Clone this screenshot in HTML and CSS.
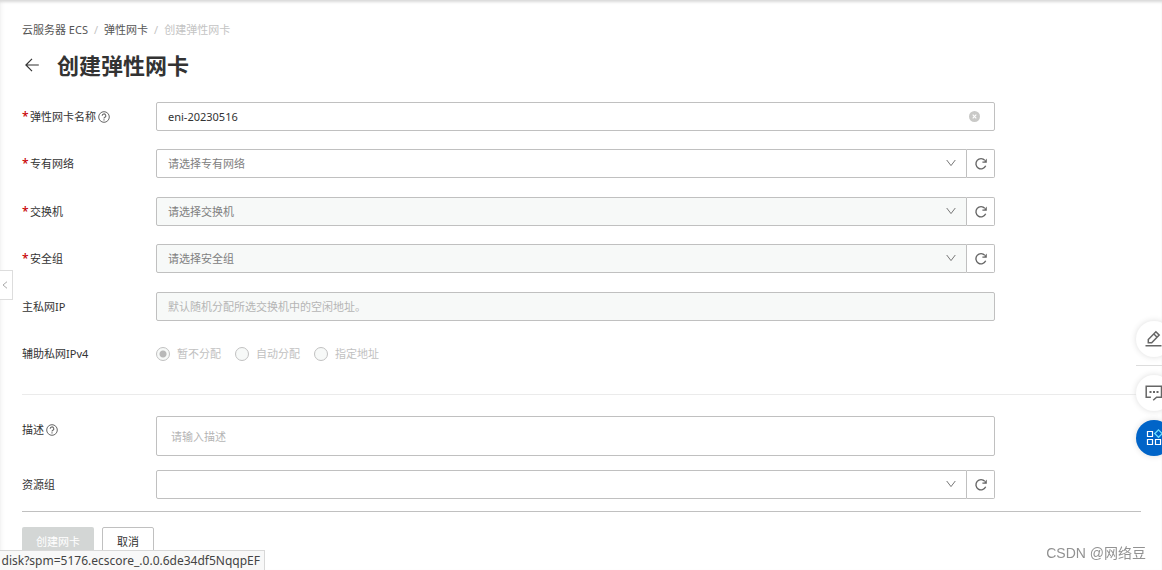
FILE: index.html
```html
<!DOCTYPE html>
<html lang="zh-CN">
<head>
<meta charset="utf-8">
<title>创建弹性网卡</title>
<link rel="stylesheet" href="styles.css">
</head>
<body>
<svg class="sprite" aria-hidden="true">
  <symbol id="refresh" viewBox="0 0 14 14"><path d="M11.7 8.8A5.1 5.1 0 1 1 10.9 3.4" fill="none" stroke="currentColor" stroke-width="1.4"/><path d="M12.8 1.4v4.4H8.4V4.6l2-.2z" fill="currentColor"/></symbol>
  <symbol id="chevron" viewBox="0 0 10 8"><path d="M.7 1 5 6.6 9.3 1" fill="none" stroke="currentColor"/></symbol>
  <symbol id="help" viewBox="0 0 12 12"><circle cx="6" cy="6" r="5.3" fill="none" stroke="currentColor"/><path d="M4.2 4.8a1.8 1.8 0 1 1 2.7 1.5c-.7.4-.9.6-.9 1.2M6 8.3v1.2" fill="none" stroke="currentColor" stroke-width="1.1"/></symbol>
</svg>

<main class="page">
  <nav class="crumbs" aria-label="面包屑">
    <a href="#">云服务器 ECS</a><span class="slash">/</span><a href="#">弹性网卡</a><span class="slash">/</span><span class="current">创建弹性网卡</span>
  </nav>

  <header class="heading">
    <button class="back" type="button" aria-label="返回"><svg viewBox="0 0 14 14"><path d="M13.8 7H.9M7 .8.9 7 7 13.2" fill="none" stroke="currentColor" stroke-width="1.2"/></svg></button>
    <h1>创建弹性网卡</h1>
  </header>

  <form>
    <div class="rows">
      <div class="row">
        <label class="label required" for="name">弹性网卡名称<svg class="help"><use href="#help"/></svg></label>
        <div class="field">
          <input class="box" id="name" type="text" value="eni-20230516">
          <button class="clear" type="button" aria-label="清除"><svg viewBox="0 0 11 11"><circle cx="5.5" cy="5.5" r="5.5" fill="#c9c9c7"/><path d="m3.7 3.7 3.6 3.6m0-3.6L3.7 7.3" stroke="#fff" stroke-width="1.1"/></svg></button>
        </div>
      </div>
      <div class="row">
        <label class="label required" for="vpc">专有网络</label>
        <div class="field">
          <div class="picker"><select class="box" id="vpc"><option>请选择专有网络</option></select><svg class="chevron"><use href="#chevron"/></svg></div>
          <button class="refresh" type="button" aria-label="刷新"><svg><use href="#refresh"/></svg></button>
        </div>
      </div>
      <div class="row">
        <label class="label required" for="switch">交换机</label>
        <div class="field">
          <div class="picker"><select class="box" id="switch" disabled><option>请选择交换机</option></select><svg class="chevron"><use href="#chevron"/></svg></div>
          <button class="refresh" type="button" aria-label="刷新"><svg><use href="#refresh"/></svg></button>
        </div>
      </div>
      <div class="row">
        <label class="label required" for="group">安全组</label>
        <div class="field">
          <div class="picker"><select class="box" id="group" disabled><option>请选择安全组</option></select><svg class="chevron"><use href="#chevron"/></svg></div>
          <button class="refresh" type="button" aria-label="刷新"><svg><use href="#refresh"/></svg></button>
        </div>
      </div>
      <div class="row">
        <label class="label" for="ip">主私网IP</label>
        <div class="field"><input class="box" id="ip" type="text" placeholder="默认随机分配所选交换机中的空闲地址。" disabled></div>
      </div>
      <div class="row" role="radiogroup" aria-labelledby="ipv4">
        <span class="label" id="ipv4">辅助私网IPv4</span>
        <div class="field radios">
          <label><input type="radio" name="ipv4" checked disabled>暂不分配</label>
          <label><input type="radio" name="ipv4" disabled>自动分配</label>
          <label><input type="radio" name="ipv4" disabled>指定地址</label>
        </div>
      </div>
    </div>

    <div class="extra">
      <div class="row top">
        <label class="label" for="desc">描述<svg class="help"><use href="#help"/></svg></label>
        <div class="field"><textarea class="box" id="desc" rows="1" placeholder="请输入描述"></textarea></div>
      </div>
      <div class="row">
        <label class="label" for="resource">资源组</label>
        <div class="field">
          <div class="picker"><select class="box" id="resource"><option></option></select><svg class="chevron"><use href="#chevron"/></svg></div>
          <button class="refresh" type="button" aria-label="刷新"><svg><use href="#refresh"/></svg></button>
        </div>
      </div>
    </div>

    <footer class="actions">
      <button class="btn primary" type="submit" disabled>创建网卡</button>
      <button class="btn" type="button">取消</button>
    </footer>
  </form>
</main>

<button class="collapse" type="button" aria-label="展开侧栏"><svg viewBox="0 0 6 8"><path d="M5 .7 1 4l4 3.3" fill="none" stroke="currentColor"/></svg></button>

<aside class="tools">
  <button class="tool" type="button" aria-label="反馈"><svg viewBox="0 0 18 18"><path d="M.5 15.8h16M3.3 12.8V9.6l7.6-7.8 3.3 3.3-7.5 7.7zM8.9 4l3.2 3.2" fill="none" stroke="currentColor" stroke-width="1.5"/></svg></button>
  <hr>
  <button class="tool chat" type="button" aria-label="咨询"><svg viewBox="0 0 18 18"><path d="M5.9 13.3H1.2v-11h15.3v11h-4.9l-3.4 2.9" fill="none" stroke="currentColor" stroke-width="1.5"/><path d="M4.5 7h2v2h-2zM8 7h2v2H8zM11.5 7h2v2h-2z" fill="currentColor"/></svg></button>
  <button class="tool blue" type="button" aria-label="应用"><svg viewBox="0 0 18 18"><path d="M2.5 2.5h5v5h-5zM2.5 10.5h5v5h-5zM10.5 10.5h5v5h-5z" fill="none" stroke="#fff" stroke-width="1.2"/><path d="m13.5 .9 3.7 3.7-3.7 3.7-3.7-3.7z" fill="none" stroke="#6ce0ff" stroke-width="1.3"/></svg></button>
</aside>

<div class="status">disk?spm=5176.ecscore_.0.0.6de34df5NqqpEF</div>
<div class="credit">CSDN @网络豆</div>
</body>
</html>
```

FILE: styles.css
```css
* { box-sizing: border-box; }
body {
  margin: 0;
  min-height: 100vh;
  color: #333;
  background: #fff;
  box-shadow: inset 0 3px 3px -1px #d8d8d8, inset 4px 0 4px -2px #f6f6f6;
  font: 11px/16px "Noto Sans", "Noto Sans CJK SC", sans-serif;
}
button, input, select, textarea { margin: 0; font: inherit; color: inherit; }
button { padding: 0; border: 0; background: none; }
svg { display: block; }
.sprite { position: absolute; width: 0; height: 0; }

.page { padding: 22px 21px 0 22px; }
.crumbs { display: flex; gap: 6px; }
.crumbs a { color: #555; text-decoration: none; }
.crumbs .slash, .crumbs .current { color: #c4c4c4; }
.heading { display: flex; align-items: center; gap: 18px; margin: 11px 0 21px; padding-left: 3px; }
.back svg { width: 14px; height: 14px; }
h1 { margin: 0; font-size: 22px; line-height: 32px; font-weight: 700; }

.rows { padding-bottom: 26px; border-bottom: 1px solid #ebebeb; }
.row { display: flex; align-items: center; min-height: 29px; margin-bottom: 18px; }
.row:nth-child(even) { margin-bottom: 19px; }
.rows .row:last-child, .extra .row:last-child { margin-bottom: 0; }
.label { display: flex; align-items: center; flex: 0 0 134px; }
.required::before { content: "*"; width: 8px; color: #c80000; font-weight: 500; font-size: 12px; }
.help { width: 12px; height: 12px; margin-left: 2px; color: #666; }
.field { position: relative; display: flex; width: 75%; }
.box {
  display: block;
  width: 100%;
  height: 29px;
  padding: 0 11px;
  border: 1px solid #c0c0c0;
  border-radius: 2px;
  background: #fff;
  outline: 0;
}
.box::placeholder { color: #b5b5b5; opacity: 1; }
.box:disabled { background: #f7f9f8; opacity: 1; }
.picker { position: relative; flex: 1; }
select.box { appearance: none; color: #808080; border-radius: 2px 0 0 2px; }
.chevron { position: absolute; right: 11px; top: 10px; width: 10px; height: 8px; color: #777; pointer-events: none; }
.refresh {
  display: grid;
  place-items: center;
  width: 28px;
  border: 1px solid #c0c0c0;
  border-left: 0;
  border-radius: 0 2px 2px 0;
  color: #666;
}
.refresh svg { width: 14px; height: 14px; }
.clear { position: absolute; right: 15px; top: 9px; }
.clear svg { width: 11px; height: 11px; }

.radios { gap: 14px; color: #c1c1c1; }
.radios label { display: flex; align-items: center; gap: 7px; }
.radios input {
  appearance: none;
  width: 14px;
  height: 14px;
  border: 1px solid #c1c1c1;
  border-radius: 50%;
  background: #f7f9f8;
}
.radios input:checked { background: radial-gradient(circle, #b8b8b8 3px, #f7f9f8 4px); }

.extra { padding: 21px 0 12px; border-bottom: 1px solid #c0c0c0; }
.row.top { align-items: flex-start; margin-bottom: 14px; }
.top .label { padding-top: 6px; }
textarea.box { height: 40px; padding: 12px 14px; resize: none; overflow: hidden; }
.actions { display: flex; gap: 8px; padding-top: 15px; }
.btn { height: 29px; padding: 0 14px; border: 1px solid #c0c0c0; border-radius: 2px; background: #fff; }
.primary { color: #fff; border: 0; background: #d3d6d5; }

.collapse {
  position: fixed;
  left: -1px;
  top: 270px;
  width: 14px;
  height: 30px;
  padding-left: 2px;
  border: 1px solid #ddd;
  background: #fff;
  color: #aaa;
}
.collapse svg { width: 6px; height: 8px; }
.tools { position: fixed; right: -10px; top: 321px; width: 36px; }
.tools hr { margin: 8px 0 9px; border: 0; border-top: 1px solid #ddd; }
.tool {
  display: grid;
  place-items: center;
  width: 36px;
  height: 36px;
  border-radius: 50%;
  background: #fff;
  color: #666;
  box-shadow: 0 0 6px #ddd;
}
.tool svg { width: 18px; height: 18px; }
.chat { margin-bottom: 9px; }
.blue { background: #0064c8; }
.status {
  position: fixed;
  left: 0;
  bottom: 0;
  display: flex;
  justify-content: flex-end;
  width: 265px;
  height: 20px;
  padding-right: 4px;
  overflow: hidden;
  border: 1px solid #d8d8d8;
  border-width: 1px 1px 0 0;
  background: #f8f8f8;
  color: #444;
  font-size: 12px;
  line-height: 19px;
}
.credit {
  position: fixed;
  right: 16px;
  bottom: 7px;
  color: #929292;
  font: 14px/20px "Liberation Sans", "Noto Sans CJK SC", sans-serif;
}
```
